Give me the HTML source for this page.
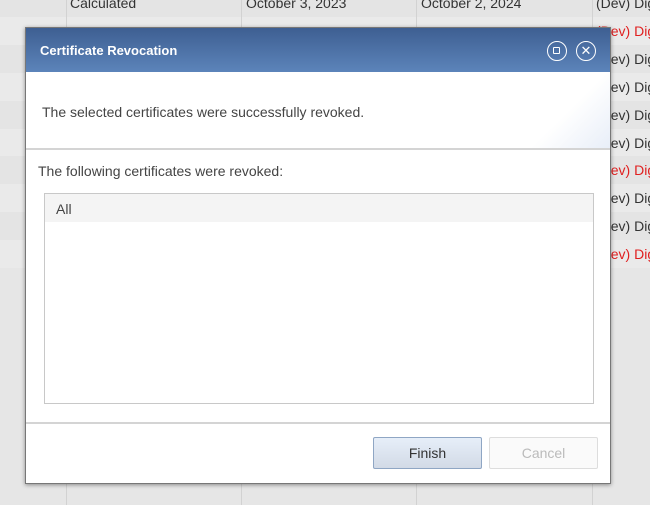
<!DOCTYPE html>
<html><head><style>
*{margin:0;padding:0;box-sizing:border-box}
body{width:650px;height:505px;overflow:hidden;background:#e6e6e6;font-family:"Liberation Sans",Arial,sans-serif;position:relative}
.row{position:absolute;left:0;width:650px;height:28px;font-size:14px;color:#333;white-space:nowrap;overflow:hidden}
.row span{position:absolute;top:6px}
.vl{position:absolute;top:0;height:505px;width:1px;background:#d2d2d2}
.red{color:#e02020}
.dlg{position:absolute;left:25px;top:27px;width:586px;height:457px;background:#fff;border:1px solid #777;box-shadow:0 1px 4px rgba(0,0,0,.4)}
.hd{height:44px;background:linear-gradient(#3e5f92,#5c84ba);color:#fff;font-weight:bold;font-size:13px;padding:15px 0 0 14px}
.ic{position:absolute;top:13px;width:20px;height:20px;border:1.5px solid #fff;border-radius:50%}
</style></head><body>
<div class="row" style="top:-11px;background:#e4e4e4"><span style="left:70px">Calculated</span><span style="left:246px">October 3, 2023</span><span style="left:421px">October 2, 2024</span><span style="left:596px">(Dev) Dig</span></div>
<div class="row red" style="top:17px;background:#eaeaea"><span style="left:596px">(Dev) Dig</span></div>
<div class="row" style="top:45px;background:#e4e4e4"><span style="left:596px">(Dev) Dig</span></div>
<div class="row" style="top:73px;background:#eaeaea"><span style="left:596px">(Dev) Dig</span></div>
<div class="row" style="top:101px;background:#e4e4e4"><span style="left:596px">(Dev) Dig</span></div>
<div class="row" style="top:129px;background:#eaeaea"><span style="left:596px">(Dev) Dig</span></div>
<div class="row red" style="top:156px;background:#e4e4e4"><span style="left:596px">(Dev) Dig</span></div>
<div class="row" style="top:184px;background:#eaeaea"><span style="left:596px">(Dev) Dig</span></div>
<div class="row" style="top:212px;background:#e4e4e4"><span style="left:596px">(Dev) Dig</span></div>
<div class="row red" style="top:240px;background:#eaeaea"><span style="left:596px">(Dev) Dig</span></div>
<div class="vl" style="left:66px"></div><div class="vl" style="left:241px"></div><div class="vl" style="left:416px"></div><div class="vl" style="left:592px"></div>
<div class="dlg">
<div class="hd">Certificate Revocation</div>
<div class="ic" style="left:521px"><div style="position:absolute;left:5px;top:5px;width:7px;height:7px;border:1.5px solid #fff;border-radius:1px"></div></div>
<div class="ic" style="left:550px;color:#fff;font-size:13px;text-align:center;line-height:17px">✕</div>
<div style="position:absolute;top:44px;left:0;width:584px;height:78px;border-bottom:2px solid #d4d4d4;background:linear-gradient(135deg,#fff 88%,#e8eef8)"></div>
<div style="position:absolute;left:16px;top:76px;font-size:14px;color:#444;white-space:nowrap">The selected certificates were successfully revoked.</div>
<div style="position:absolute;left:12px;top:135px;font-size:14px;color:#444;white-space:nowrap">The following certificates were revoked:</div>
<div style="position:absolute;left:18px;top:165px;width:550px;height:211px;border:1px solid #c8c8c8">
<div style="height:28px;background:#f4f4f4;font-size:14px;color:#444;padding:7px 0 0 11px">All</div></div>
<div style="position:absolute;top:394px;left:0;width:584px;height:2px;background:#d4d4d4"></div>
<div style="position:absolute;left:347px;top:409px;width:109px;height:32px;border:1px solid #8fa6c4;border-radius:2px;background:linear-gradient(#e6eef9,#d2dae6);font-size:14px;color:#333;text-align:center;line-height:30px">Finish</div>
<div style="position:absolute;left:463px;top:409px;width:109px;height:32px;border:1px solid #ddd;border-radius:2px;background:#fafafa;font-size:14px;color:#bbb;text-align:center;line-height:30px">Cancel</div>
</div>
</body></html>
